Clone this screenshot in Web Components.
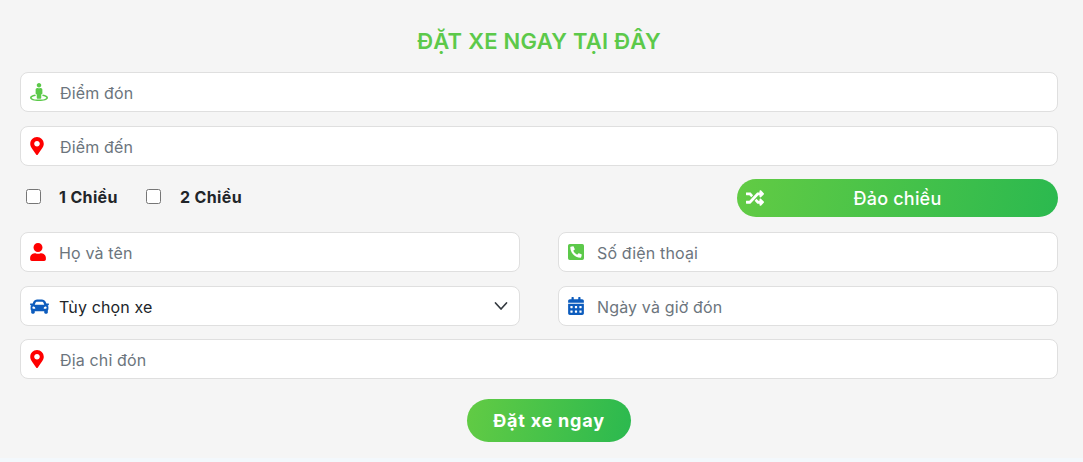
<!DOCTYPE html>
<html lang="vi">
<head>
<meta charset="utf-8">
<title>Đặt xe</title>
<style>
    html, body {
        margin: 0;
        background: #f3f8fc;
        font-family: Inter, "Noto Sans", "Liberation Sans", sans-serif;
    }
</style>
</head>
<body>
<dat-xe-form>
    <o-nhap icon="street" mau="#5cc94a" goi-y="Điểm đón"></o-nhap>
    <o-nhap icon="pin" mau="#ff0000" goi-y="Điểm đến"></o-nhap>
    <hang-chieu></hang-chieu>
    <hai-cot>
        <o-nhap icon="user" mau="#ff0000" goi-y="Họ và tên"></o-nhap>
        <o-nhap icon="phone" mau="#5cc94a" goi-y="Số điện thoại"></o-nhap>
        <o-chon icon="car" mau="#0d5cbd" goi-y="Tùy chọn xe"></o-chon>
        <o-nhap icon="calendar" mau="#0d5cbd" goi-y="Ngày và giờ đón"></o-nhap>
    </hai-cot>
    <o-nhap class="dia-chi" icon="pin" mau="#ff0000" goi-y="Địa chỉ đón"></o-nhap>
    <nut-xanh class="gui" cao="43" dam="700" gian="0.8">Đặt xe ngay</nut-xanh>
</dat-xe-form>

<script>
const ICONS = {
    street: ["0 0 512 512", "M367.9 329.76c-4.62 5.3-9.78 10.1-15.9 13.65v22.94c66.52 9.34 112 28.05 112 49.65 0 30.93-93.12 56-208 56S48 446.93 48 416c0-21.6 45.48-40.3 112-49.65v-22.94c-6.12-3.55-11.28-8.35-15.9-13.65C58.87 345.34 0 378.05 0 416c0 53.02 114.62 96 256 96s256-42.98 256-96c0-37.95-58.87-70.66-144.1-86.24zM256 128c35.35 0 64-28.65 64-64S291.35 0 256 0s-64 28.65-64 64 28.65 64 64 64zm-64 192v96c0 17.67 14.33 32 32 32h64c17.67 0 32-14.33 32-32v-96c17.67 0 32-14.33 32-32v-96c0-26.51-21.49-48-48-48h-11.8c-11.07 5.03-23.26 8-36.2 8s-25.13-2.97-36.2-8H208c-26.51 0-48 21.49-48 48v96c0 17.67 14.33 32 32 32z"],
    pin: ["0 0 384 512", "M172.268 501.67C26.97 291.031 0 269.413 0 192 0 85.961 85.961 0 192 0s192 85.961 192 192c0 77.413-26.97 99.031-172.268 309.67-9.535 13.774-29.93 13.773-39.464 0zM192 272c44.183 0 80-35.817 80-80s-35.817-80-80-80-80 35.817-80 80 35.817 80 80 80z"],
    user: ["0 0 448 512", "M224 256c70.7 0 128-57.3 128-128S294.7 0 224 0 96 57.3 96 128s57.3 128 128 128zm89.6 32h-16.7c-22.2 10.2-46.9 16-72.9 16s-50.6-5.8-72.9-16h-16.7C60.2 288 0 348.2 0 422.4V464c0 26.5 21.5 48 48 48h352c26.5 0 48-21.5 48-48v-41.6c0-74.2-60.2-134.4-134.4-134.4z"],
    phone: ["0 32 448 448", "M400 32H48A48 48 0 0 0 0 80v352a48 48 0 0 0 48 48h352a48 48 0 0 0 48-48V80a48 48 0 0 0-48-48zm-16.39 307.37l-15 65A15 15 0 0 1 354 416C194 416 64 286.29 64 126a15.7 15.7 0 0 1 11.63-14.61l65-15A18.23 18.23 0 0 1 144 96a16.27 16.27 0 0 1 13.79 9.09l30 70A17.9 17.9 0 0 1 189 181a17 17 0 0 1-5.5 11.61l-37.89 31a231.91 231.91 0 0 0 110.78 110.78l31-37.89A17 17 0 0 1 299 291a17.85 17.85 0 0 1 5.91 1.21l70 30A16.25 16.25 0 0 1 384 336a17.41 17.41 0 0 1-.39 3.37z"],
    calendar: ["0 0 448 512", "M0 464c0 26.5 21.5 48 48 48h352c26.5 0 48-21.5 48-48V192H0v272zm320-196c0-6.6 5.4-12 12-12h40c6.6 0 12 5.4 12 12v40c0 6.6-5.4 12-12 12h-40c-6.6 0-12-5.4-12-12v-40zm0 128c0-6.6 5.4-12 12-12h40c6.6 0 12 5.4 12 12v40c0 6.6-5.4 12-12 12h-40c-6.6 0-12-5.4-12-12v-40zM192 268c0-6.6 5.4-12 12-12h40c6.6 0 12 5.4 12 12v40c0 6.6-5.4 12-12 12h-40c-6.6 0-12-5.4-12-12v-40zm0 128c0-6.6 5.4-12 12-12h40c6.6 0 12 5.4 12 12v40c0 6.6-5.4 12-12 12h-40c-6.6 0-12-5.4-12-12v-40zM64 268c0-6.6 5.4-12 12-12h40c6.6 0 12 5.4 12 12v40c0 6.6-5.4 12-12 12H76c-6.6 0-12-5.4-12-12v-40zm0 128c0-6.6 5.4-12 12-12h40c6.6 0 12 5.4 12 12v40c0 6.6-5.4 12-12 12H76c-6.6 0-12-5.4-12-12v-40zM400 64h-48V16c0-8.8-7.2-16-16-16h-32c-8.8 0-16 7.2-16 16v48H160V16c0-8.8-7.2-16-16-16h-32c-8.8 0-16 7.2-16 16v48H48C21.5 64 0 85.5 0 112v48h448v-48c0-26.5-21.5-48-48-48z"],
    car: ["0 64 512 384", "M499.99 176h-59.87l-16.64-41.6C406.38 91.63 365.57 64 319.5 64h-127c-46.06 0-86.88 27.63-103.99 70.4L71.87 176H12.01C4.2 176-1.53 183.34.37 190.91l6 24C7.7 220.25 12.5 224 18.01 224h20.07C24.65 235.73 16 252.78 16 272v48c0 16.12 6.16 30.67 16 41.93V416c0 17.67 14.33 32 32 32h32c17.67 0 32-14.33 32-32v-32h256v32c0 17.67 14.33 32 32 32h32c17.67 0 32-14.33 32-32v-54.07c9.84-11.25 16-25.8 16-41.93v-48c0-19.22-8.65-36.27-22.07-48H494c5.51 0 10.31-3.75 11.64-9.09l6-24c1.89-7.57-3.84-14.91-11.65-14.91zm-352.06-17.83c7.29-18.22 24.94-30.17 44.57-30.17h127c19.63 0 37.28 11.95 44.57 30.17L384 208H128l19.93-49.83zM96 319.8c-19.2 0-32-12.76-32-31.9S76.8 256 96 256s48 28.71 48 47.85-28.8 15.95-48 15.95zm320 0c-19.2 0-48 3.19-48-15.95S396.8 256 416 256s32 12.76 32 31.9-12.8 31.9-32 31.9z"],
    random: ["0 32 512 448", "M504.971 359.029c9.373 9.373 9.373 24.569 0 33.941l-80 79.984c-15.01 15.01-40.971 4.49-40.971-16.971V416h-58.785a12.004 12.004 0 0 1-8.773-3.812l-70.556-75.596 53.333-57.143L352 336h32v-39.981c0-21.438 25.943-31.998 40.971-16.971l80 79.981zM12 176h84l52.781 56.551 53.333-57.143-70.556-75.596A11.999 11.999 0 0 0 122.785 96H12c-6.627 0-12 5.373-12 12v56c0 6.627 5.373 12 12 12zm372 0v39.984c0 21.46 25.961 31.98 40.971 16.971l80-79.984c9.373-9.373 9.373-24.569 0-33.941l-80-79.981C409.943 24.021 384 34.582 384 56.019V96h-58.785a12.004 12.004 0 0 0-8.773 3.812L96 336H12c-6.627 0-12 5.373-12 12v56c0 6.627 5.373 12 12 12h110.785c3.326 0 6.503-1.381 8.773-3.812L352 176h32z"]
};

function veIcon(ten, mau, rong, cao) {
    const [hop, duong] = ICONS[ten];
    return `<svg width="${rong}" height="${cao}" viewBox="${hop}" fill="${mau}" aria-hidden="true"><path d="${duong}"/></svg>`;
}

// rong, cao, va be rong cot icon
const CO_ICON = {
    street: [18, 18, 30],
    pin: [14, 18, 30],
    user: [16, 18, 29],
    phone: [16, 16, 29],
    calendar: [16, 18, 29],
    car: [19, 15, 29]
};

const KIEU_O = `
    :host {
        display: block;
    }
    .o {
        box-sizing: border-box;
        display: flex;
        align-items: center;
        height: 40px;
        padding-left: 9px;
        background: #fff;
        border: 1px solid #dfdfdf;
        border-radius: 8px;
    }
    .icon {
        display: flex;
        align-items: center;
        flex: none;
    }
    input, select {
        flex: 1;
        min-width: 0;
        box-sizing: border-box;
        height: 100%;
        padding: 2px 0 0;
        border: 0;
        outline: 0;
        background: transparent;
        font: 400 16px Inter, "Noto Sans", "Liberation Sans", sans-serif;
        letter-spacing: 0.15px;
        color: #212529;
    }
    input::placeholder {
        color: #6c757d;
        opacity: 1;
    }
`;

class DatXeForm extends HTMLElement {
    constructor() {
        super();
        this.attachShadow({mode: "open"});
        this.shadowRoot.innerHTML = `
        <style>
            :host {
                display: block;
                box-sizing: border-box;
                height: 458px;
                padding: 28px 25px 0 20px;
                background: #f5f5f5;
            }
            h2 {
                margin: 0 0 18px;
                font-size: 22px;
                line-height: 26px;
                font-weight: 600;
                letter-spacing: 0.25px;
                text-align: center;
                color: #5cc94a;
            }
            .cac-hang {
                display: flex;
                flex-direction: column;
                gap: 14px;
            }
        </style>
        <h2>ĐẶT XE NGAY TẠI ĐÂY</h2>
        <div class="cac-hang"><slot></slot></div>`;
    }
}

class ONhap extends HTMLElement {
    constructor() {
        super();
        const ten = this.getAttribute("icon");
        const [rong, cao, cot] = CO_ICON[ten];
        this.attachShadow({mode: "open"});
        this.shadowRoot.innerHTML = `
        <style>${KIEU_O}</style>
        <label class="o">
            <span class="icon" style="width:${cot}px">${veIcon(ten, this.getAttribute("mau"), rong, cao)}</span>
            <input type="text" placeholder="${this.getAttribute("goi-y")}">
        </label>`;
    }
}

class OChon extends HTMLElement {
    constructor() {
        super();
        const ten = this.getAttribute("icon");
        const [rong, cao, cot] = CO_ICON[ten];
        this.attachShadow({mode: "open"});
        this.shadowRoot.innerHTML = `
        <style>
            ${KIEU_O}
            select {
                appearance: none;
            }
            .mui-ten {
                flex: none;
                margin-right: 10px;
            }
        </style>
        <label class="o">
            <span class="icon" style="width:${cot}px">${veIcon(ten, this.getAttribute("mau"), rong, cao)}</span>
            <select><option>${this.getAttribute("goi-y")}</option></select>
            <svg class="mui-ten" width="16" height="16" viewBox="0 0 16 16" fill="none" stroke="#343a40" stroke-width="1.7" stroke-linecap="round" stroke-linejoin="round"><path d="m2.5 5 5.5 6 5.5-6"/></svg>
        </label>`;
    }
}

class HaiCot extends HTMLElement {
    constructor() {
        super();
        this.attachShadow({mode: "open"});
        this.shadowRoot.innerHTML = `
        <style>
            :host {
                display: grid;
                grid-template-columns: 500px 500px;
                column-gap: 38px;
                row-gap: 14px;
                margin-top: 1px;
            }
        </style>
        <slot></slot>`;
    }
}

class NutXanh extends HTMLElement {
    constructor() {
        super();
        const cao = this.getAttribute("cao") || 38;
        this.attachShadow({mode: "open"});
        this.shadowRoot.innerHTML = `
        <style>
            :host {
                display: block;
            }
            button {
                position: relative;
                display: block;
                box-sizing: border-box;
                width: 100%;
                height: ${cao}px;
                padding: 0;
                border: 0;
                border-radius: 30px;
                background: linear-gradient(100deg, #62cb44 0%, #2bb94f 100%);
                color: #fff;
                font: ${this.getAttribute("dam") || 500} 18px Inter, "Noto Sans", "Liberation Sans", sans-serif;
                letter-spacing: ${this.getAttribute("gian") || 0.2}px;
                text-align: center;
            }
            ::slotted([slot="icon"]) {
                position: absolute;
                left: 9px;
                top: 11px;
                line-height: 0;
            }
        </style>
        <button type="button"><slot name="icon"></slot><slot></slot></button>`;
    }
}

class HangChieu extends HTMLElement {
    constructor() {
        super();
        this.attachShadow({mode: "open"});
        this.shadowRoot.innerHTML = `
        <style>
            :host {
                display: flex;
                align-items: center;
                height: 38px;
                margin-top: -1px;
            }
            label {
                display: flex;
                align-items: center;
                margin-bottom: 2px;
                font-size: 16px;
                font-weight: 700;
                letter-spacing: 0.35px;
                color: #212529;
            }
            .mot {
                width: 120px;
                padding-left: 6px;
            }
            input {
                flex: none;
                width: 15px;
                height: 15px;
                margin: 0 18px 2px 0;
            }
            .hai input {
                margin-right: 19px;
            }
            nut-xanh {
                width: 321px;
                margin-left: auto;
            }
        </style>
        <label class="mot"><input type="checkbox">1 Chiều</label>
        <label class="hai"><input type="checkbox">2 Chiều</label>
        <nut-xanh><span slot="icon">${veIcon("random", "#fff", 18, 16)}</span>Đảo chiều</nut-xanh>`;
    }
}

customElements.define("nut-xanh", NutXanh);
customElements.define("dat-xe-form", DatXeForm);
customElements.define("o-nhap", ONhap);
customElements.define("o-chon", OChon);
customElements.define("hai-cot", HaiCot);
customElements.define("hang-chieu", HangChieu);

// hai phan tu cuoi lech voi khoang cach chung
document.querySelector(".dia-chi").style.marginTop = "-1px";
document.querySelector(".gui").style.cssText = "width:164px;margin:6px 0 0 447px";
</script>
</body>
</html>
